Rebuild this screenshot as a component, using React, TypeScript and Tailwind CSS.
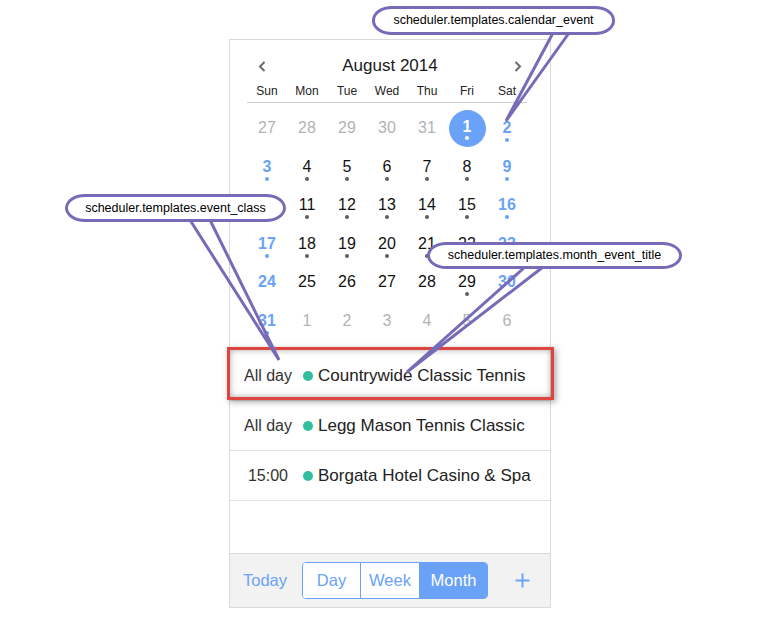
import React from "react";

type Cell = {
    d: number;
    muted?: boolean;
    dot?: "gray" | "blue" | "white";
    sel?: boolean;
};

const weekDays = ["Sun", "Mon", "Tue", "Wed", "Thu", "Fri", "Sat"];

const weeks: Array<Array<Cell>> = [
    [{d: 27, muted: true}, {d: 28, muted: true}, {d: 29, muted: true}, {d: 30, muted: true}, {d: 31, muted: true}, {d: 1, sel: true, dot: "white"}, {d: 2, dot: "blue"}],
    [{d: 3, dot: "blue"}, {d: 4, dot: "gray"}, {d: 5, dot: "gray"}, {d: 6, dot: "gray"}, {d: 7, dot: "gray"}, {d: 8, dot: "gray"}, {d: 9, dot: "blue"}],
    [{d: 10, dot: "blue"}, {d: 11, dot: "gray"}, {d: 12, dot: "gray"}, {d: 13, dot: "gray"}, {d: 14, dot: "gray"}, {d: 15, dot: "gray"}, {d: 16, dot: "blue"}],
    [{d: 17, dot: "blue"}, {d: 18, dot: "gray"}, {d: 19, dot: "gray"}, {d: 20, dot: "gray"}, {d: 21, dot: "gray"}, {d: 22, dot: "gray"}, {d: 23, dot: "blue"}],
    [{d: 24}, {d: 25}, {d: 26}, {d: 27}, {d: 28}, {d: 29, dot: "gray"}, {d: 30}],
    [{d: 31, dot: "blue"}, {d: 1, muted: true}, {d: 2, muted: true}, {d: 3, muted: true}, {d: 4, muted: true}, {d: 5, muted: true}, {d: 6, muted: true}],
];

const events = [
    {time: "All day", title: "Countrywide Classic Tennis"},
    {time: "All day", title: "Legg Mason Tennis Classic"},
    {time: "15:00", title: "Borgata Hotel Casino & Spa"},
];

const dotColor = {
    gray: "bg-[#5f5f5f]",
    blue: "bg-[#6aa2f8]",
    white: "bg-white",
};

function DayCell({cell, col}: {cell: Cell; col: number}) {
    const weekend = !cell.muted && (col === 0 || col === 6);

    if (cell.sel) {
        return (
            <div className="flex items-center justify-center">
                <div className="w-[37px] h-[37px] rounded-full bg-[#6aa2f8] flex flex-col items-center pt-[9.5px]">
                    <span className="text-[16px] leading-[16px] font-bold text-white">{cell.d}</span>
                    <span className="mt-[1px] w-[4px] h-[4px] rounded-full bg-white"/>
                </div>
            </div>
        );
    }

    let color = "text-[#111]";
    if (cell.muted) color = "text-[#b3b3b3]";
    else if (weekend) color = "text-[#6aa2f8] font-bold";

    return (
        <div className="flex flex-col items-center pt-[11px]">
            <span className={`text-[16px] leading-[16px] ${color}`}>{cell.d}</span>
            {cell.dot && <span className={`mt-[2px] w-[4px] h-[4px] rounded-full ${dotColor[cell.dot]}`}/>}
        </div>
    );
}

function Chevron({right}: {right?: boolean}) {
    return (
        <svg width="8" height="11" viewBox="0 0 8 11" className={right ? "rotate-180" : ""}>
            <polyline points="6.5,1 2,5.5 6.5,10" fill="none" stroke="#6b6b6b" strokeWidth="2"/>
        </svg>
    );
}

function Callout({className, text}: {className: string; text: string}) {
    return (
        <div className={`absolute flex items-center justify-center bg-white border-[3px] border-[#766bb7] rounded-[20px/14px] text-[12.5px] leading-none text-black ${className}`}>
            {text}
        </div>
    );
}

export default function App() {
    return (
        <div className="relative w-[775px] h-[618px] overflow-hidden bg-white pt-[39px] pl-[229px] font-['Liberation_Sans',Arial,sans-serif]">
            <div className="w-[322px] h-[569px] border border-[#dadada] flex flex-col">
                <div className="mt-[13px] h-[26px] px-[28px] flex items-center justify-between">
                    <Chevron/>
                    <span className="text-[17px] text-[#1a1a1a]">August 2014</span>
                    <Chevron right/>
                </div>

                <div className="ml-[17px] w-[280px] h-[24px] grid grid-cols-7 items-center border-b border-[#cfcfcf]">
                    {weekDays.map((d) => (
                        <span key={d} className="text-center text-[12px] text-[#222]">{d}</span>
                    ))}
                </div>

                <div className="ml-[17px] w-[280px] pt-[6px] pb-[11px] grid grid-cols-7 auto-rows-[38.5px]">
                    {weeks.map((week, r) =>
                        week.map((cell, c) => <DayCell key={r + "-" + c} cell={cell} col={c}/>)
                    )}
                </div>

                {events.map((ev, i) => (
                    <div key={i} className="relative h-[50px] border-b border-[#e0e0e0] flex items-center">
                        {i === 0 && (
                            <div className="absolute -left-[3px] -right-[4px] -top-[4px] bottom-0 border-[3px] border-[#e0443e] shadow-[inset_0_0_6px_rgba(0,0,0,0.35),2px_2px_6px_rgba(0,0,0,0.35)]"/>
                        )}
                        <span className="ml-[6px] w-[64px] text-center text-[16px] text-[#333]">{ev.time}</span>
                        <span className="ml-[3px] w-[10px] h-[10px] rounded-full bg-[#31bf9f]"/>
                        <span className="ml-[5px] text-[17px] text-[#222]">{ev.title}</span>
                    </div>
                ))}

                <div className="flex-1"/>

                <div className="h-[54px] border-t border-[#dadada] bg-[#f2f2f2] flex items-center pl-[13px]">
                    <span className="text-[16.5px] text-[#6aa2f8]">Today</span>
                    <div className="ml-[15px] w-[186px] h-[37px] flex rounded-[4px] border border-[#6aa2f8] overflow-hidden text-[16.5px]">
                        <span className="w-[58px] border-r border-[#6aa2f8] bg-white text-[#6aa2f8] flex items-center justify-center">Day</span>
                        <span className="w-[59px] border-r border-[#6aa2f8] bg-white text-[#6aa2f8] flex items-center justify-center">Week</span>
                        <span className="flex-1 bg-[#6aa2f8] text-white flex items-center justify-center">Month</span>
                    </div>
                    <svg width="15" height="15" viewBox="0 0 15 15" className="ml-[27px]">
                        <path d="M7.5 0.5v14M0.5 7.5h14" stroke="#6aa2f8" strokeWidth="2"/>
                    </svg>
                </div>
            </div>

            {/* annotation tails */}
            <svg className="absolute left-0 top-0 pointer-events-none" width="775" height="618">
                <polyline points="553,33 506,121 569,33" fill="none" stroke="#766bb7" strokeWidth="3"/>
                <polyline points="190,220 279,360 210,220" fill="none" stroke="#766bb7" strokeWidth="3"/>
                <polyline points="525,267 407,372 543,267" fill="none" stroke="#766bb7" strokeWidth="3"/>
            </svg>

            <Callout className="left-[372px] top-[6px] w-[243px] h-[29px]" text="scheduler.templates.calendar_event"/>
            <Callout className="left-[65px] top-[194px] w-[221px] h-[28px]" text="scheduler.templates.event_class"/>
            <Callout className="left-[427px] top-[242px] w-[255px] h-[27px]" text="scheduler.templates.month_event_title"/>
        </div>
    );
}
